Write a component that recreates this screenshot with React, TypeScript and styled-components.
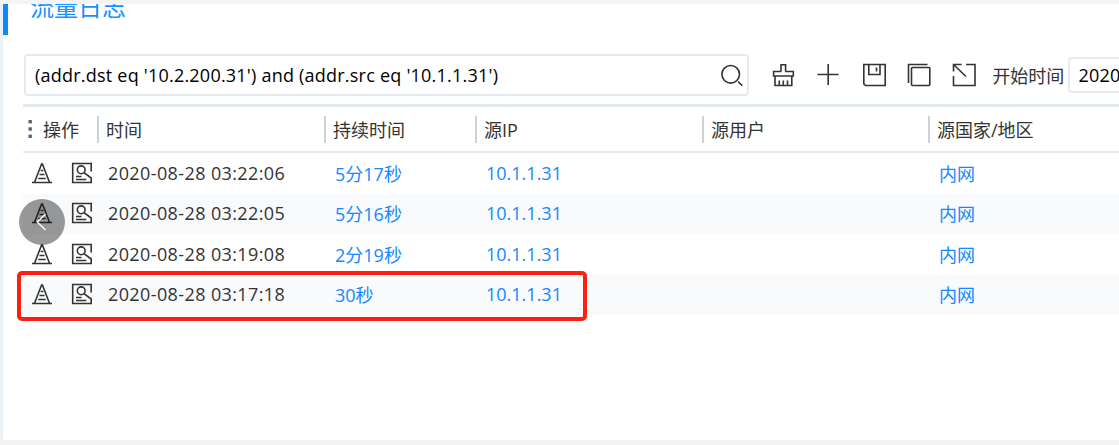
import React from 'react';
import styled, { createGlobalStyle } from 'styled-components';

const GlobalStyle = createGlobalStyle`
  * { box-sizing: border-box; }
  body {
    margin: 0;
    overflow: hidden;
    background: #f4f4f4;
    font-family: "Open Sans", "Noto Sans CJK SC", sans-serif;
    font-size: 18px;
    color: #333;
  }
`;

const COLUMNS = '74px 227px 151px 227px 226px 1fr';

const Page = styled.div`
  height: 445px;
  padding: 4px 0 5px;
  overflow: hidden;
  position: relative;
`;

const Panel = styled.main`
  height: 436px;
  border-left: 3px solid #e9f2f6;
  background: #fff;
  overflow: hidden;
`;

const TitleBar = styled.header`
  display: flex;
  align-items: flex-start;
  height: 31px;
  border-left: 5px solid #0a8cff;
  padding-left: 22px;
`;

const Title = styled.h1`
  margin: -15px 0 0;
  font-size: 24px;
  line-height: 36px;
  font-weight: 400;
  color: #1890ff;
`;

const Toolbar = styled.div`
  display: flex;
  align-items: center;
  height: 42px;
  margin-top: 19px;
  padding-left: 21px;
  white-space: nowrap;
`;

const SearchBox = styled.div`
  display: flex;
  align-items: center;
  justify-content: space-between;
  flex: none;
  width: 725px;
  height: 42px;
  padding: 0 3px 0 9px;
  border: 2px solid #e4eaee;
  border-radius: 4px;
  color: #000;
`;

const Query = styled.span<{ $spacing: number }>`
  letter-spacing: ${(p) => p.$spacing}px;
`;

const Tools = styled.div`
  display: flex;
  flex: none;
  gap: 21.35px;
  margin-left: 22px;
`;

const Icon = styled.svg`
  display: block;
  flex: none;
  fill: none;
  stroke: #333;
  stroke-width: 1.6;
`;

const ArrowIcon = styled(Icon)`
  stroke: #fff;
  stroke-width: 1.4;
`;

const FieldLabel = styled.label`
  flex: none;
  margin-left: 16px;
`;

const DateBox = styled.div`
  display: flex;
  align-items: center;
  flex: none;
  width: 220px;
  height: 36px;
  margin-left: 4px;
  padding-left: 8px;
  border: 2px solid #e4eaee;
  border-radius: 4px;
  color: #000;
`;

const Table = styled.section`
  margin: 8px 0 0 20px;
  border-top: 3px solid #e2eaed;
`;

const HeaderRow = styled.div`
  display: grid;
  grid-template-columns: ${COLUMNS};
  align-items: center;
  height: 46px;
  border-bottom: 2px solid #e4eaee;
`;

const HeaderCell = styled.div`
  display: flex;
  align-items: center;
  height: 27px;
  padding: 0 0 1px 7px;
  border-left: 2px solid #cbd2d5;
`;

const ActionHeader = styled.div`
  display: flex;
  align-items: center;
  gap: 10px;
  padding: 0 0 1px 5px;
`;

const Row = styled.div<{ $striped: boolean }>`
  display: grid;
  grid-template-columns: ${COLUMNS};
  align-items: center;
  height: ${(p) => (p.$striped ? 40 : 41)}px;
  padding-bottom: 2px;
  background: ${(p) => (p.$striped ? '#f8fafc' : '#fff')};
`;

const Cell = styled.div<{ $link?: boolean; $spacing?: number }>`
  padding-left: 11px;
  white-space: nowrap;
  color: ${(p) => (p.$link ? '#1489ff' : '#333')};
  letter-spacing: ${(p) => p.$spacing ?? 0}px;
`;

const Actions = styled.div`
  display: flex;
  gap: 18px;
  padding-left: 8px;
`;

const BackButton = styled.button`
  position: absolute;
  left: 19px;
  top: 199px;
  width: 46px;
  height: 46px;
  padding: 0;
  border: 0;
  border-radius: 50%;
  background: rgba(0, 0, 0, 0.4);
`;

const Highlight = styled.div`
  position: absolute;
  left: 17px;
  top: 271px;
  width: 570px;
  height: 50px;
  border: 4px solid #ff1e10;
  border-radius: 5px;
`;

const ConeIcon = () => (
  <Icon width="22" height="22" viewBox="0 0 22 22">
    <path d="M1 20.5H21M3.6 20L10.6 2H11.4L18.4 20M9.7 8.5H12.3M8.5 12.5H13.5M7.3 16.5H14.7" />
  </Icon>
);

const InspectIcon = () => (
  <Icon width="22" height="22" viewBox="0 0 22 22">
    <path d="M20.2 9.5V1.5H1.7V20.5H20.2V16L13 10.6M5 14.5H10.5M5 17.5H15.3" />
    <circle cx="10.2" cy="7.8" r="3.9" />
  </Icon>
);

const rows = [
  { time: '2020-08-28 03:22:06', duration: '5分17秒' },
  { time: '2020-08-28 03:22:05', duration: '5分16秒' },
  { time: '2020-08-28 03:19:08', duration: '2分19秒' },
  { time: '2020-08-28 03:17:18', duration: '30秒' },
];

export default function App() {
  return (
    <>
      <GlobalStyle />
      <Page>
        <Panel>
          <TitleBar>
            <Title>流量日志</Title>
          </TitleBar>
          <Toolbar>
            <SearchBox>
              <Query $spacing={0.22}>(addr.dst eq '10.2.200.31') and (addr.src eq '10.1.1.31')</Query>
              <Icon width="24" height="24" viewBox="0 0 24 24">
                <circle cx="10.7" cy="11.3" r="8.8" />
                <path d="M18 18.5L22.3 22.6" />
              </Icon>
            </SearchBox>
            <Tools>
              <Icon width="24" height="24" viewBox="0 0 24 24">
                <path d="M10 8.5V1.8H14.6V8.5M10.3 8.5H2.6V13H22.3V8.5H14.3M4 13V22.5H20.8V13M8.3 22.5V17.5M12.3 22.5V17.5M16.5 22.5V17.5" />
              </Icon>
              <Icon width="24" height="24" viewBox="0 0 24 24">
                <path d="M1.5 11.5H22.5M12.2 1V22" />
              </Icon>
              <Icon width="24" height="24" viewBox="0 0 24 24">
                <path d="M1.8 1.5H23.2V22.5H3.5L1.8 20.8ZM6.8 2V11.5H18V2M14.5 4.5V8.5" />
              </Icon>
              <Icon width="24" height="24" viewBox="0 0 24 24">
                <path d="M1.5 20V1.5H20.5" />
                <rect x="4.5" y="4.5" width="18.3" height="18" rx="1" />
              </Icon>
              <Icon width="24" height="24" viewBox="0 0 24 24">
                <path d="M1.5 8.5V1.5H9.5M1.5 1.5L14 13.5M14 1.5H23V22.5H1.5V13" />
              </Icon>
            </Tools>
            <FieldLabel>开始时间</FieldLabel>
            <DateBox>
              <Query $spacing={0.22}>2020-08-28</Query>
            </DateBox>
          </Toolbar>
          <Table>
            <HeaderRow>
              <ActionHeader>
                <svg width="5" height="20" viewBox="0 0 5 20" fill="#5b6578">
                  <rect x="0.5" y="1" width="3.4" height="3.4" />
                  <rect x="0.5" y="8.3" width="3.4" height="3.4" />
                  <rect x="0.5" y="15.6" width="3.4" height="3.4" />
                </svg>
                操作
              </ActionHeader>
              <HeaderCell>时间</HeaderCell>
              <HeaderCell>持续时间</HeaderCell>
              <HeaderCell>源IP</HeaderCell>
              <HeaderCell>源用户</HeaderCell>
              <HeaderCell>源国家/地区</HeaderCell>
            </HeaderRow>
            {rows.map((row, i) => (
              <Row key={row.time} $striped={i % 2 === 1}>
                <Actions>
                  <ConeIcon />
                  <InspectIcon />
                </Actions>
                <Cell $spacing={0.39}>{row.time}</Cell>
                <Cell $link>{row.duration}</Cell>
                <Cell $link>10.1.1.31</Cell>
                <Cell />
                <Cell $link>内网</Cell>
              </Row>
            ))}
          </Table>
        </Panel>
        <BackButton aria-label="返回">
          <ArrowIcon width="46" height="46" viewBox="0 0 46 46">
            <path d="M26.5 15L18.3 23L26.5 31" />
          </ArrowIcon>
        </BackButton>
        <Highlight />
      </Page>
    </>
  );
}
